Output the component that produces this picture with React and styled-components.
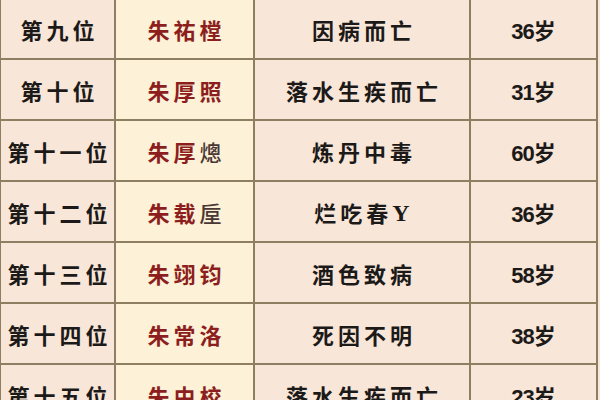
import { Fragment } from 'react';
import styled, { createGlobalStyle } from 'styled-components';

const GlobalStyle = createGlobalStyle`
  html, body {
    margin: 0;
    padding: 0;
    background: #f7e8da;
    overflow: hidden;
  }
`;

const Table = styled.div`
  display: grid;
  grid-template-columns: 113px 137px 214px 125px;
  grid-auto-rows: 59px;
  gap: 2px;
  padding: 2px;
  width: max-content;
  margin-top: -3px;
  margin-left: -1px;
  background: #8f7f62;
  font-family: "Noto Sans CJK SC", "Noto Sans", sans-serif;
  font-weight: 700;
  font-size: 22px;
  color: #1c1a18;
`;

const Cell = styled.div`
  display: flex;
  align-items: center;
  justify-content: center;
  letter-spacing: ${({ $spread }) => ($spread ? '4px' : '0')};
  background: ${({ $tone }) => ($tone === 'name' ? '#fdf1d8' : '#f8e6d8')};
  color: ${({ $tone }) => ($tone === 'name' ? '#8c1f1d' : '#1c1a18')};
  padding-left: ${({ $spread }) => ($spread ? '4px' : '0')};
`;

const Age = styled.span`
  font-family: "Liberation Sans", "Noto Sans CJK SC", sans-serif;
  letter-spacing: -1px;
  & > em {
    font-style: normal;
    font-family: "Noto Sans CJK SC", sans-serif;
    letter-spacing: 0;
  }
`;

const Rare = styled.span`
  color: #4a3834;
  font-weight: 500;
`;

const Latin = styled.span`
  font-family: "Liberation Serif", serif;
  font-size: 24px;
  position: relative;
  top: 2px;
`;

const rows = [
  ['第九位', <>朱祐樘</>, '因病而亡', '36'],
  ['第十位', <>朱厚照</>, '落水生疾而亡', '31'],
  ['第十一位', <>朱厚<Rare>熜</Rare></>, '炼丹中毒', '60'],
  ['第十二位', <>朱载<Rare>垕</Rare></>, <>烂吃春<Latin>Y</Latin></>, '36'],
  ['第十三位', <>朱翊钧</>, '酒色致病', '58'],
  ['第十四位', <>朱常洛</>, '死因不明', '38'],
  ['第十五位', <>朱由校</>, '落水生疾而亡', '23'],
];

export default function App() {
  return (
    <>
      <GlobalStyle />
      <Table>
        {rows.map(([rank, name, cause, age]) => (
          <Fragment key={rank}>
            <Cell $spread>{rank}</Cell>
            <Cell $tone="name" $spread>{name}</Cell>
            <Cell $spread>{cause}</Cell>
            <Cell>
              <Age>{age}<em>岁</em></Age>
            </Cell>
          </Fragment>
        ))}
      </Table>
    </>
  );
}
